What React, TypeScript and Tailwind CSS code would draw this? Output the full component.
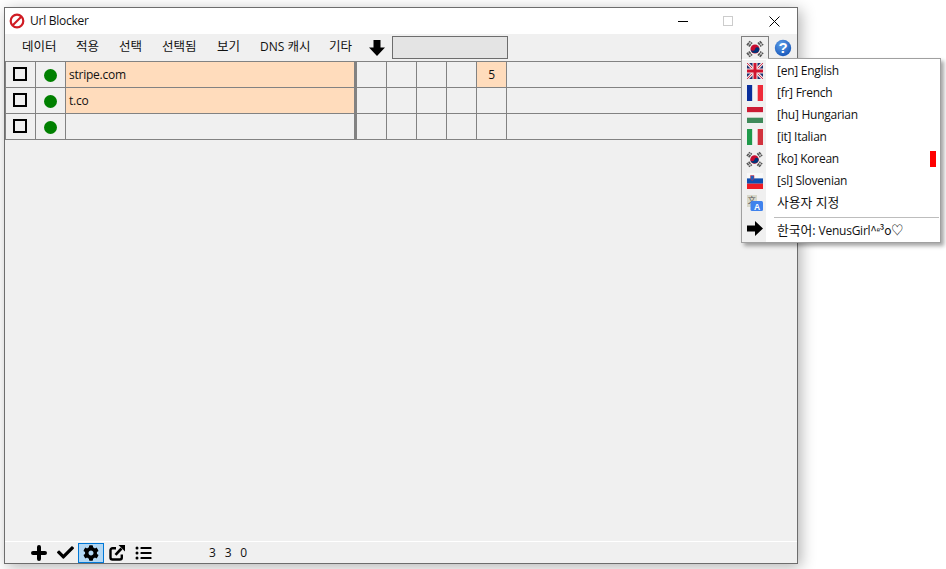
import { FaCheck, FaCog, FaListUl } from "react-icons/fa";

const FONT = "font-['Open_Sans','Noto_Sans_CJK_KR',sans-serif]";

function KoreaFlag({ size = 18 }: { size?: number }) {
  return (
    <svg width={size} height={size} viewBox="0 0 18 18">
      <circle cx="9" cy="9" r="4.5" fill="#c60c30" />
      <path d="M4.6 8.2A4.5 4.5 0 0 0 13.4 9.8 2.2 2.2 0 0 0 9 9 2.2 2.2 0 0 1 4.6 8.2Z" fill="#003478" />
      <g stroke="#555" strokeWidth="1.7" strokeDasharray="3 0.6">
        <path d="M1 5.2 L4.200 1.200M2.800 6.500 L6 2.500" />
        <path d="M12 2.500 L15.200 6.500M13.800 1.200 L17 5.200" />
        <path d="M1 12.800 L4.200 16.800M2.800 11.500 L6 15.500" />
        <path d="M12 15.500 L15.200 11.500M13.800 16.800 L17 12.800" />
      </g>
    </svg>
  );
}
function UKFlag() {
  return (
    <svg width="16" height="16" viewBox="0 0 16 16">
      <rect width="16" height="16" fill="#1b2f6e" />
      <path d="M0 0L16 16M16 0L0 16" stroke="#f3dfe2" strokeWidth="3" />
      <path d="M0 0L16 16M16 0L0 16" stroke="#d03a52" strokeWidth="1" />
      <path d="M8 0V16M0 8H16" stroke="#f5e8ea" strokeWidth="5" />
      <path d="M8 0V16M0 8H16" stroke="#d0142f" strokeWidth="3" />
    </svg>
  );
}
function Tricolor({ a, b, c }: { a: string; b: string; c: string }) {
  return (
    <svg width="16" height="16" viewBox="0 0 16 16">
      <rect width="5.400" height="16" fill={a} />
      <rect x="5.400" width="5.300" height="16" fill={b} />
      <rect x="10.700" width="5.300" height="16" fill={c} />
    </svg>
  );
}
function Hungary() {
  return (
    <svg width="16" height="16" viewBox="0 0 16 16">
      <rect width="16" height="5.400" fill="#cd1b34" />
      <rect y="5.400" width="16" height="5.300" fill="#f6f0f0" />
      <rect y="10.700" width="16" height="5.300" fill="#3f8a5a" />
    </svg>
  );
}
function Slovenia() {
  return (
    <svg width="16" height="16" viewBox="0 0 16 16">
      <rect width="16" height="5.400" fill="#f8f8f8" />
      <rect y="5.400" width="16" height="5.300" fill="#0f4fb0" />
      <rect y="10.700" width="16" height="5.300" fill="#ee1c25" />
      <path d="M3.500 2.500h3.500v3q0 1.500-1.750 2Q3.500 7 3.500 5.500Z" fill="#1f5fbf" stroke="#e5232b" strokeWidth=".5" />
    </svg>
  );
}
function Translate() {
  return (
    <svg width="16" height="16" viewBox="0 0 16 16">
      <rect width="10" height="12" fill="#d8d8ca" />
      <text x="4.500" y="7.500" fontSize="8" fill="#555" fontFamily="Noto Sans CJK SC" textAnchor="middle">文</text>
      <rect x="3.500" y="6" width="12.500" height="10" rx="1.500" fill="#3f82ed" />
      <text x="10" y="14.500" fontSize="8.500" fill="#fff" fontFamily="Liberation Sans" fontWeight="700" textAnchor="middle">A</text>
    </svg>
  );
}
function HelpIcon() {
  return (
    <svg width="18" height="18" viewBox="0 0 18 18">
      <defs>
        <radialGradient id="h" cx=".4" cy=".3" r=".8">
          <stop offset="0" stopColor="#5f9fe8" />
          <stop offset="1" stopColor="#0f4fb5" />
        </radialGradient>
      </defs>
      <circle cx="9" cy="9" r="8.200" fill="url(#h)" />
      <text x="9" y="14.300" fontSize="15" fontWeight="700" fill="#fff" fontFamily="Liberation Sans" textAnchor="middle">?</text>
    </svg>
  );
}
function BlockIcon() {
  return (
    <svg width="16" height="16" viewBox="0 0 16 16" fill="none" stroke="#d01c24" strokeWidth="2.200">
      <circle cx="8" cy="8" r="6.300" />
      <path d="M3.500 12.500L12.500 3.500" />
    </svg>
  );
}
function DownArrow() {
  return (
    <svg width="16" height="16" viewBox="0 0 16 16"><path d="M4.500 0h7v7.500H16L8 16 0 7.500h4.500Z" fill="#000" /></svg>
  );
}
function RightArrow() {
  return (
    <svg width="16" height="15" viewBox="0 0 16 15"><path d="M0 4.500h8V0l8 7.500-8 7.500v-4.500H0Z" fill="#000" /></svg>
  );
}
function PlusIcon() {
  return (
    <svg width="16" height="16" viewBox="0 0 16 16"><path d="M2 8H14M8 2V14" stroke="#000" strokeWidth="4" strokeLinecap="round" /></svg>
  );
}
function ExternalIcon() {
  return (
    <svg width="16" height="16" viewBox="0 0 16 16" fill="none">
      <path d="M7 3.200H3.500A2 2 0 0 0 1.500 5.200V12.500A2 2 0 0 0 3.500 14.500H10.800A2 2 0 0 0 12.800 12.500V9.500" stroke="#000" strokeWidth="2.400" />
      <path d="M6.500 9.800L12.500 3.500" stroke="#000" strokeWidth="2.600" />
      <path d="M9.500 0H16V6.500Z" fill="#000" />
    </svg>
  );
}

const menus = [
  { w: "w-[54px]", t: "데이터" },
  { w: "w-[43px]", t: "적용" },
  { w: "w-[43px]", t: "선택" },
  { w: "w-[55px]", t: "선택됨" },
  { w: "w-[43px]", t: "보기" },
];

const rows = [
  { name: "stripe.com", count: "5", hl: true },
  { name: "t.co", count: "", hl: true },
  { name: "", count: "", hl: false },
];

const items = [
  { icon: <UKFlag />, label: "[en] English" },
  { icon: <Tricolor a="#0a2f9c" b="#f5f5f5" c="#ef2b3a" />, label: "[fr] French" },
  { icon: <Hungary />, label: "[hu] Hungarian" },
  { icon: <Tricolor a="#1f9a4b" b="#f5f5f5" c="#d2333e" />, label: "[it] Italian" },
  { icon: <KoreaFlag size={17} />, label: "[ko] Korean", mark: true },
  { icon: <Slovenia />, label: "[sl] Slovenian" },
];

export default function App() {
  return (
    <div className={`w-[946px] h-[569px] bg-white pl-[4px] pt-[7px] overflow-hidden relative ${FONT} text-[12px] tracking-[-0.25px] text-[#111]`}>
      <div className="w-[794px] h-[557px] border border-[#6d6d6d] bg-[#f0f0f0] flex flex-col shadow-[3px_3px_14px_rgba(0,0,0,0.3)]">
        <div className="h-[26px] bg-white flex items-center shrink-0">
          <div className="ml-[4px] mr-[5px]"><BlockIcon /></div>
          <span>Url Blocker</span>
          <div className="ml-auto flex items-center">
            <svg className="mr-[35px]" width="10" height="10" viewBox="0 0 10 10"><path d="M0 5.500H10" stroke="#000" /></svg>
            <svg className="mr-[36px]" width="10" height="10" viewBox="0 0 10 10"><rect x=".5" y=".5" width="9" height="9" fill="none" stroke="#ccc" /></svg>
            <svg className="mr-[17px]" width="11" height="11" viewBox="0 0 11 11"><path d="M.5.500L10.500 10.500M10.500.500L.5 10.500" stroke="#000" /></svg>
          </div>
        </div>
        <div className="h-[27px] flex items-center shrink-0 pl-[17px]">
          <div className="flex items-center text-[12.5px] tracking-normal whitespace-nowrap">
            {menus.map((m) => <div key={m.t} className={m.w}>{m.t}</div>)}
            <div className="w-[69px]"><span className="text-[12px]">DNS</span> 캐시</div>
            <div className="w-[24px]">기타</div>
          </div>
          <div className="ml-[16px]"><DownArrow /></div>
          <div className="ml-[7px] w-[116px] h-[23px] bg-[#e4e4e4] border border-[#6d6d6d]" />
          <div className="ml-auto w-[28px] h-[25px] mt-[2px] flex items-center justify-center border-t border-x border-[#808080] bg-[#f0f0f0]">
            <KoreaFlag />
          </div>
          <div className="w-[28px] flex justify-center"><HelpIcon /></div>
        </div>
        <div className="border-t border-[#828282]">
          {rows.map((r, i) => (
            <div key={i} className="flex h-[26px] border-b border-[#828282]">
              <div className="w-[31px] border-l border-r border-[#828282] flex items-center justify-center">
                <div className="w-[14px] h-[14px] border-2 border-black -mt-[1px] -ml-[1px]" />
              </div>
              <div className="w-[30px] border-r border-[#828282] flex items-center justify-center">
                <div className="w-[13px] h-[13px] rounded-full bg-[#008000] mt-[1px]" />
              </div>
              <div className={`w-[291px] border-r-[3px] border-[#828282] pl-[3px] flex items-center ${r.hl ? "bg-[#ffdcbc]" : ""}`}>{r.name}</div>
              <div className="w-[30px] border-r border-[#828282]" />
              <div className="w-[30px] border-r border-[#828282]" />
              <div className="w-[30px] border-r border-[#828282]" />
              <div className="w-[30px] border-r border-[#828282]" />
              <div className={`w-[30px] border-r border-[#828282] flex items-center justify-center ${r.count ? "bg-[#ffdcbc]" : ""}`}>{r.count}</div>
            </div>
          ))}
        </div>
        <div className="flex-1" />
        <div className="h-[22px] border-t border-white flex items-center pl-[21px] shrink-0">
          <div className="w-[26px] flex justify-center"><PlusIcon /></div>
          <div className="w-[26px] flex justify-center"><FaCheck className="w-[17px] h-[17px] text-black" /></div>
          <div className="w-[26px] h-[20px] flex justify-center items-center bg-[#b3d7f3] border border-[#0078d7]"><FaCog className="w-[16px] h-[16px] text-black" /></div>
          <div className="w-[26px] flex justify-center"><ExternalIcon /></div>
          <div className="w-[26px] flex justify-center"><FaListUl className="w-[17px] h-[16px] text-black" /></div>
          <div className="ml-[53px] flex gap-[9px]"><span>3</span><span>3</span><span>0</span></div>
        </div>
      </div>
      <div className="absolute left-[741px] top-[58px] w-[200px] h-[185px] bg-white border border-[#a0a0a0] shadow-[3px_3px_4px_rgba(0,0,0,0.35)] pt-px flex flex-col">
        <div className="absolute -left-px -top-px w-[27px] h-[1px] bg-[#f0f0f0] border-l border-[#808080]" />
        {items.map((it) => (
          <div key={it.label} className="h-[22px] flex items-center relative">
            <div className="w-[24px] h-[22px] bg-[#f0f0f0] flex items-center justify-center shrink-0 pl-[1px]">{it.icon}</div>
            <span className="ml-[11px]">{it.label}</span>
            {it.mark && <div className="absolute right-[4px] top-[3px] w-[6px] h-[16px] bg-[#ff0000]" />}
          </div>
        ))}
        <div className="h-[22px] flex items-center">
          <div className="w-[24px] h-[22px] bg-[#f0f0f0] flex items-center justify-center shrink-0 pl-[1px]"><Translate /></div>
          <span className="ml-[11px] text-[12.8px] tracking-normal">사용자 지정</span>
        </div>
        <div className="flex items-stretch flex-1">
          <div className="w-[24px] bg-[#f0f0f0] flex items-center justify-center shrink-0 pl-[1px]"><RightArrow /></div>
          <div className="flex-1 ml-[8px] mr-[1px]">
            <div className="h-px bg-[#bdbdbd] mt-[3px]" />
            <div className="ml-[3px] mt-[3px] whitespace-nowrap"><span className="text-[12.8px] tracking-normal">한국어:</span> VenusGirl<span className="font-['Noto_Sans_CJK_KR']">^ᵉ³o♡</span></div>
          </div>
        </div>
      </div>
    </div>
  );
}
